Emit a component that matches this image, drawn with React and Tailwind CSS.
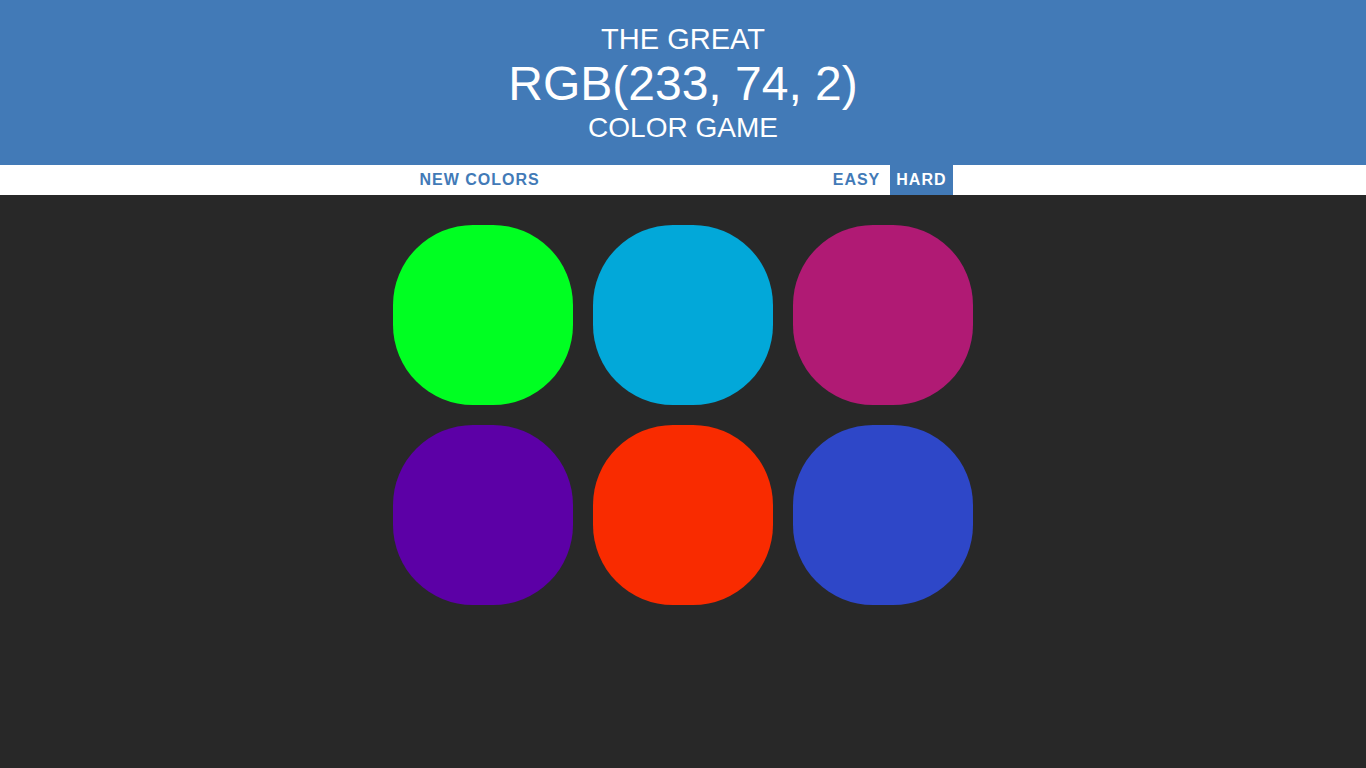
import { useState } from 'react';

const colors = ['#00ff22', '#02a8d9', '#b01a74', '#5c00a6', '#f92b00', '#2e47c8'];

export default function App() {
  const [mode, setMode] = useState('hard');

  return (
    <div className="min-h-screen bg-[#282828] font-['Liberation_Sans',Arial,sans-serif]">
      <h1 className="bg-[#427ab7] text-white text-center font-normal uppercase pt-[22px] pb-[20px]">
        <span className="block text-[29px] leading-[35px]">The Great</span>
        <span className="block text-[48px] leading-[54px]">RGB(233, 74, 2)</span>
        <span className="block text-[28px] leading-[34px]">Color Game</span>
      </h1>

      <div className="bg-white h-[30px] flex justify-center items-stretch gap-[4px]">
        <button className="px-[6px] text-[16px] font-bold tracking-[1px] uppercase text-[#427ab7] leading-[30px]">
          New Colors
        </button>
        <span className="w-[273px]" />
        <button onClick={() => setMode('easy')}
          className={`px-[6px] text-[16px] font-bold tracking-[1px] uppercase leading-[30px] ${mode === 'easy' ? 'bg-[#427ab7] text-white' : 'text-[#427ab7]'}`}>
          Easy
        </button>
        <button onClick={() => setMode('hard')}
          className={`px-[6px] text-[16px] font-bold tracking-[1px] uppercase leading-[30px] ${mode === 'hard' ? 'bg-[#427ab7] text-white' : 'text-[#427ab7]'}`}>
          Hard
        </button>
      </div>

      <div className="w-[600px] mx-auto pt-[20px] grid grid-cols-3">
        {colors.map((c) => (
          <div key={c} className="m-[10px] w-[180px] h-[180px] rounded-[80px]" style={{ backgroundColor: c }} />
        ))}
      </div>
    </div>
  );
}
